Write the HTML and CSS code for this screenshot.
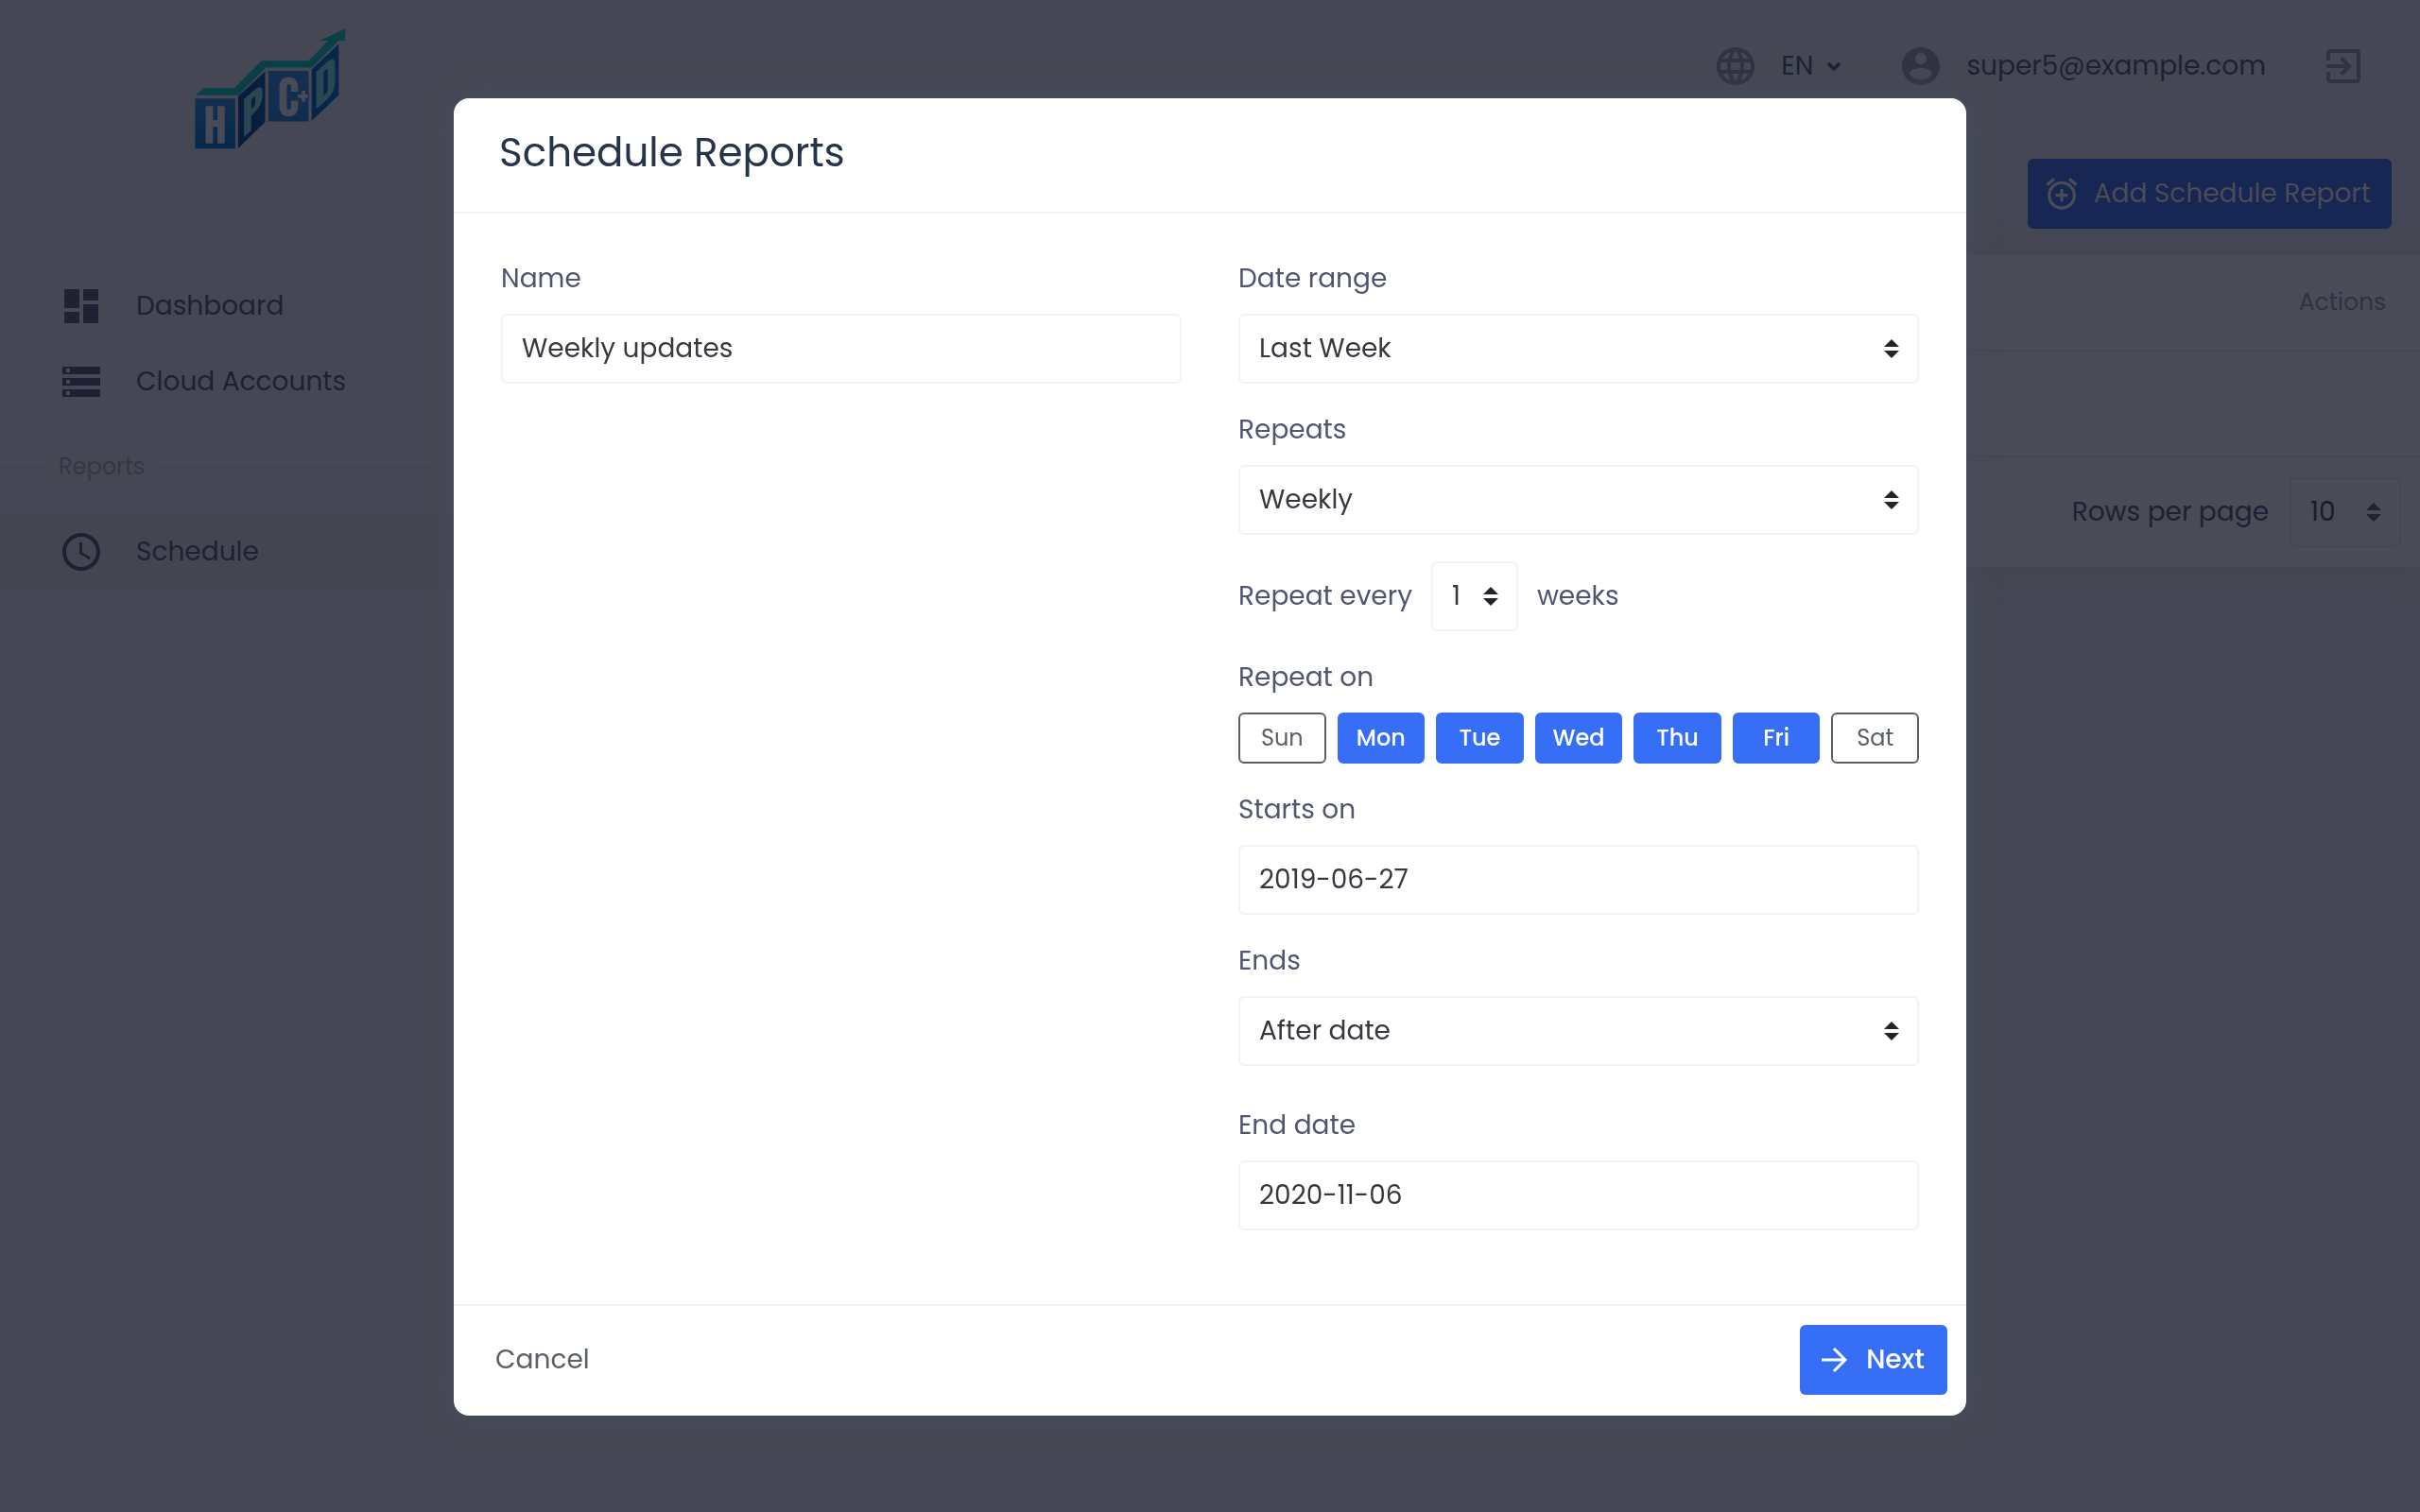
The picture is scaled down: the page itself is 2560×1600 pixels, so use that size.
FILE: index.html
```html
<!DOCTYPE html>
<html lang="en">
<head>
<meta charset="utf-8">
<meta name="viewport" content="width=device-width, initial-scale=1">
<title>Schedule Reports</title>
<link rel="stylesheet" href="styles.css">
</head>
<body>
<div class="app">
  <aside class="sidebar">
    <a class="brand" href="#" aria-label="HPC+D home">
      <svg class="brand-logo" viewBox="60 50 520 400" aria-hidden="true">
        <defs>
          <linearGradient id="face" x1="0" y1="0" x2="0" y2="1"><stop offset="0" stop-color="#152f50"/><stop offset=".55" stop-color="#112d4e"/><stop offset="1" stop-color="#06284a"/></linearGradient>
          <linearGradient id="side" x1="0" y1="0" x2="1" y2="0"><stop offset="0" stop-color="#091c3a"/><stop offset="1" stop-color="#06284b"/></linearGradient>
        </defs>
        <path fill="#0b3f47" d="M80 272l26-23h98l86-87h150l63-64h-28l83-38-3 39h-20l-83 85H304l-88 88z"/>
        <path fill="url(#face)" d="M79 282h128v160H79zM312 194h128v161H312z"/>
        <path fill="url(#side)" d="M216 275l86-79v161l-86 84zM450 190l86-81v162l-86 83z"/>
        <g class="brand-letters" text-anchor="middle">
          <text x="143" y="422" font-size="164" fill="#484b56">H</text>
          <text x="0" y="0" font-size="164" fill="#2a4650" transform="translate(262 377) skewY(-42)">P</text>
          <text x="376" y="337" font-size="168" fill="#484b56">C</text>
          <text x="0" y="0" font-size="164" fill="#2a4650" transform="translate(494 288) skewY(-42)">D</text>
        </g>
        <path fill="#484b56" stroke="#112d4e" stroke-width="3" d="M417 256h14v12h10v14h-10v12h-14v-12h-12v-14h12z"/>
      </svg>
    </a>
    <nav class="nav">
      <a class="nav-item" href="#"><svg class="icon" viewBox="0 0 24 24"><path d="M3 13h8V3H3v10zm0 8h8v-6H3v6zm10 0h8V11h-8v10zm0-18v6h8V3h-8z"/></svg>Dashboard</a>
      <a class="nav-item" href="#"><svg class="icon" viewBox="0 0 24 24"><path d="M2 20h20v-4H2v4zm2-3h2v2H4v-2zM2 4v4h20V4H2zm4 3H4V5h2v2zm-4 7h20v-4H2v4zm2-3h2v2H4v-2z"/></svg>Cloud Accounts</a>
      <h2 class="nav-section">Reports</h2>
      <a class="nav-item nav-item-active" href="#"><svg class="icon" viewBox="0 0 24 24"><path d="M12 2C6.500 2 2 6.500 2 12s4.500 10 10 10 10-4.500 10-10S17.500 2 12 2zm0 18c-4.420 0-8-3.580-8-8s3.580-8 8-8 8 3.580 8 8-3.580 8-8 8zm.5-13H11v6l5.250 3.150.75-1.230-4.500-2.670z"/></svg>Schedule</a>
    </nav>
  </aside>
  <main class="main">
    <header class="topbar">
      <button class="language" type="button">
        <svg class="icon icon-muted" viewBox="0 0 24 24"><path d="M11.990 2C6.470 2 2 6.480 2 12s4.470 10 9.990 10C17.520 22 22 17.520 22 12S17.520 2 11.990 2zm6.930 6h-2.950c-.32-1.250-.78-2.450-1.380-3.560 1.840.63 3.370 1.910 4.330 3.560zM12 4.040c.83 1.200 1.480 2.530 1.910 3.960h-3.820c.43-1.430 1.080-2.760 1.910-3.960zM4.260 14C4.100 13.360 4 12.690 4 12s.1-1.360.26-2h3.380c-.08.66-.14 1.320-.14 2 0 .68.06 1.340.14 2H4.260zm.82 2h2.950c.32 1.250.78 2.450 1.380 3.560-1.840-.63-3.370-1.900-4.330-3.560zm2.950-8H5.080c.96-1.660 2.490-2.930 4.330-3.560C8.810 5.550 8.350 6.750 8.030 8zM12 19.960c-.83-1.200-1.480-2.530-1.910-3.960h3.820c-.43 1.430-1.080 2.760-1.910 3.960zM14.340 14H9.660c-.09-.66-.16-1.320-.16-2 0-.68.07-1.350.16-2h4.680c.09.65.16 1.320.16 2 0 .68-.07 1.340-.16 2zm.25 5.560c.6-1.110 1.060-2.310 1.380-3.560h2.950c-.96 1.650-2.490 2.930-4.330 3.560zM16.360 14c.08-.66.14-1.320.14-2 0-.68-.06-1.340-.14-2h3.380c.16.64.26 1.310.26 2s-.1 1.360-.26 2h-3.380z"/></svg>
        <span>EN</span>
        <svg class="chevron" viewBox="0 0 16 10"><path d="M2 2l6 6 6-6" fill="none" stroke="currentColor" stroke-width="3.500"/></svg>
      </button>
      <a class="account" href="#">
        <svg class="icon icon-muted" viewBox="0 0 24 24"><path d="M12 2C6.480 2 2 6.480 2 12s4.480 10 10 10 10-4.480 10-10S17.520 2 12 2zm0 3c1.660 0 3 1.340 3 3s-1.340 3-3 3-3-1.340-3-3 1.340-3 3-3zm0 14.200c-2.500 0-4.710-1.280-6-3.220.03-1.990 4-3.080 6-3.080 1.990 0 5.970 1.090 6 3.080-1.290 1.940-3.500 3.220-6 3.220z"/></svg>
        <span>super5@example.com</span>
      </a>
      <button class="logout" type="button" aria-label="Log out">
        <svg class="icon icon-muted" viewBox="0 0 24 24"><path d="M10.090 15.590L11.500 17l5-5-5-5-1.410 1.410L12.670 11H3v2h9.670l-2.580 2.590zM19 3H5c-1.110 0-2 .9-2 2v4h2V5h14v14H5v-4H3v4c0 1.100.89 2 2 2h14c1.100 0 2-.9 2-2V5c0-1.100-.9-2-2-2z"/></svg>
      </button>
    </header>
    <div class="toolbar">
      <button class="add-button" type="button">
        <svg class="icon-small" viewBox="0 0 24 24"><path d="M7.880 3.390L6.600 1.860 2 5.710l1.290 1.530 4.590-3.850zM22 5.720l-4.600-3.860-1.290 1.530 4.600 3.860L22 5.720zM12 4c-4.970 0-9 4.030-9 9s4.020 9 9 9c4.970 0 9-4.030 9-9s-4.030-9-9-9zm0 16c-3.870 0-7-3.130-7-7s3.130-7 7-7 7 3.130 7 7-3.130 7-7 7zm1-11h-2v3H8v2h3v3h2v-3h3v-2h-3V9z"/></svg>
        Add Schedule Report
      </button>
    </div>
    <section class="card">
      <table class="reports">
        <thead><tr><th scope="col">Actions</th></tr></thead>
        <tbody><tr><td></td></tr></tbody>
      </table>
      <div class="pager">
        <label for="rows">Rows per page</label>
        <select class="control control-dim" id="rows"><option>10</option></select>
      </div>
    </section>
  </main>
</div>

<div class="modal-layer">
  <form class="modal" role="dialog" aria-modal="true" aria-labelledby="modal-title">
    <header class="modal-header"><h1 id="modal-title">Schedule Reports</h1></header>
    <div class="modal-body">
      <div class="column">
        <div class="field">
          <label for="name">Name</label>
          <input class="control" id="name" type="text" value="Weekly updates">
        </div>
      </div>
      <div class="column">
        <div class="field">
          <label for="range">Date range</label>
          <select class="control" id="range"><option>Last Week</option></select>
        </div>
        <div class="field">
          <label for="repeats">Repeats</label>
          <select class="control" id="repeats"><option>Weekly</option></select>
        </div>
        <div class="repeat-every">
          <label for="every">Repeat every</label>
          <select class="control control-narrow" id="every"><option>1</option></select>
          <span>weeks</span>
        </div>
        <div class="field" role="group" aria-labelledby="repeat-on">
          <span class="label" id="repeat-on">Repeat on</span>
          <div class="days">
            <button class="day" type="button" aria-pressed="false">Sun</button>
            <button class="day day-on" type="button" aria-pressed="true">Mon</button>
            <button class="day day-on" type="button" aria-pressed="true">Tue</button>
            <button class="day day-on" type="button" aria-pressed="true">Wed</button>
            <button class="day day-on" type="button" aria-pressed="true">Thu</button>
            <button class="day day-on" type="button" aria-pressed="true">Fri</button>
            <button class="day" type="button" aria-pressed="false">Sat</button>
          </div>
        </div>
        <div class="field">
          <label for="starts">Starts on</label>
          <input class="control" id="starts" type="text" value="2019-06-27">
        </div>
        <div class="field">
          <label for="ends">Ends</label>
          <select class="control" id="ends"><option>After date</option></select>
        </div>
        <div class="field field-end">
          <label for="end-date">End date</label>
          <input class="control" id="end-date" type="text" value="2020-11-06">
        </div>
      </div>
    </div>
    <footer class="modal-footer">
      <button class="cancel" type="button">Cancel</button>
      <button class="next" type="submit">
        <svg class="arrow" viewBox="0 0 28 28"><path d="M1 14h25M14 2l12 12-12 12" fill="none" stroke="currentColor" stroke-width="3"/></svg>
        Next
      </button>
    </footer>
  </form>
</div>
</body>
</html>
```
FILE: styles.css
```css
* { box-sizing: border-box; }

body {
  margin: 0;
  background: #454854;
  color: #1d2133;
  font-family: Poppins, Inter, "Liberation Sans", sans-serif;
  font-size: 28px;
  line-height: 42px;
}

button, input, select { font: inherit; color: inherit; }
button { border: 0; background: none; padding: 0; cursor: pointer; }
a { color: inherit; text-decoration: none; }
svg { display: block; flex: none; }

.icon { width: 48px; height: 48px; fill: currentColor; }
.icon-muted { color: #2f3343; }
.icon-small { width: 40px; height: 40px; fill: currentColor; }

.app { display: flex; min-height: 100vh; }

/* Sidebar */
.sidebar { width: 480px; flex: none; }
.brand { display: block; height: 284px; padding: 27px 0 0 200px; }
.brand-logo { width: 173px; height: 133px; overflow: visible; }
.brand-letters { font-family: "Bebas Neue", "Barlow Condensed", "Roboto Condensed", "Liberation Sans Narrow", "Liberation Sans", sans-serif; font-weight: 700; }
.nav-item { display: flex; align-items: center; gap: 34px; height: 80px; padding-left: 62px; }
.nav-item-active { background: #434651; }
.nav-section {
  display: flex;
  align-items: center;
  gap: 14px;
  height: 100px;
  margin: 0;
  color: #343744;
  font-size: 24px;
  font-weight: 400;
}
.nav-section::before, .nav-section::after { content: ""; height: 2px; background: #424551; }
.nav-section::before { width: 48px; }
.nav-section::after { flex: 1; }

/* Page */
.main { flex: 1; min-width: 0; }
.topbar { display: flex; justify-content: flex-end; align-items: center; height: 140px; padding-right: 57px; }
.language, .account { display: flex; align-items: center; }
.language { gap: 24px; margin-right: 60px; }
.chevron { width: 16px; height: 10px; margin-left: -10px; }
.account { gap: 24px; margin-right: 58px; }
.toolbar { display: flex; justify-content: flex-end; padding: 28px 30px; }
.add-button {
  display: flex;
  align-items: center;
  gap: 14px;
  height: 74px;
  padding: 0 22px 0 16px;
  border-radius: 6px;
  background: #172652;
  color: #494b56;
}
.card { margin-left: 40px; background: #494b56; box-shadow: 0 0 26px #434551; }
.reports { width: 100%; border-collapse: separate; border-spacing: 0; }
.reports th, .reports td { border-bottom: 2px solid #454753; padding: 0 36px; }
.reports th { height: 102px; color: #2e3347; font-size: 25px; font-weight: 400; text-align: right; }
.reports td { height: 112px; }
.pager { display: flex; justify-content: flex-end; align-items: center; gap: 22px; height: 116px; padding-right: 20px; }

/* Form controls */
.control {
  display: block;
  width: 100%;
  height: 74px;
  margin: 0;
  padding: 0 20px;
  border: 2px solid #eff3fb;
  border-radius: 6px;
  background: #fff;
  color: #343a40;
  outline: 0;
}
select.control {
  appearance: none;
  background-image: url("data:image/svg+xml,%3Csvg xmlns='http://www.w3.org/2000/svg' viewBox='0 0 16 20'%3E%3Cpath fill='%23212529' d='M0 8L8 0l8 8zM0 12l8 8 8-8z'/%3E%3C/svg%3E");
  background-repeat: no-repeat;
  background-position: right 19px center;
  background-size: 16px 20px;
}
select.control-narrow { width: 92px; }
select.control-dim { width: 118px; border-color: #454753; background-color: #494b56; color: #191c26; }

/* Modal */
.modal-layer { position: fixed; inset: 0; display: flex; justify-content: center; align-items: flex-start; padding: 104px 40px; overflow: auto; }
.modal {
  width: 100%;
  max-width: 1600px;
  border-radius: 16px;
  background: #fff;
  box-shadow: 0 0 32px #484b5c;
}
.modal-header { padding: 28px 48px 32px; border-bottom: 2px solid #eff3fb; }
.modal-header h1 { margin: 0; color: #253448; font-size: 42px; font-weight: 400; line-height: 60px; }
.modal-body { display: grid; grid-template-columns: 1fr 1fr; gap: 60px; padding: 48px 50px 78px; color: #505570; }
.column { display: flex; flex-direction: column; gap: 28px; }
.field label, .label { display: block; margin-bottom: 16px; }
.field-end { margin-top: 14px; }
.repeat-every { display: flex; align-items: center; gap: 20px; }
.days { display: flex; gap: 12px; }
.day {
  flex: 1 1 0;
  height: 54px;
  border: 2px solid #596068;
  border-radius: 6px;
  color: #596068;
  font-size: 24px;
  line-height: 36px;
}
.day-on { border-color: #366ff5; background: #366ff5; color: #fff; font-weight: 500; }
.modal-footer {
  display: flex;
  justify-content: space-between;
  align-items: center;
  padding: 20px 20px 22px 44px;
  border-top: 2px solid #eff3fb;
}
.cancel { color: #596068; }
.next {
  display: flex;
  align-items: center;
  gap: 20px;
  height: 74px;
  padding: 0 24px 0 22px;
  border-radius: 6px;
  background: #366ff5;
  color: #fff;
  font-weight: 500;
}
.arrow { width: 28px; height: 28px; }
```
